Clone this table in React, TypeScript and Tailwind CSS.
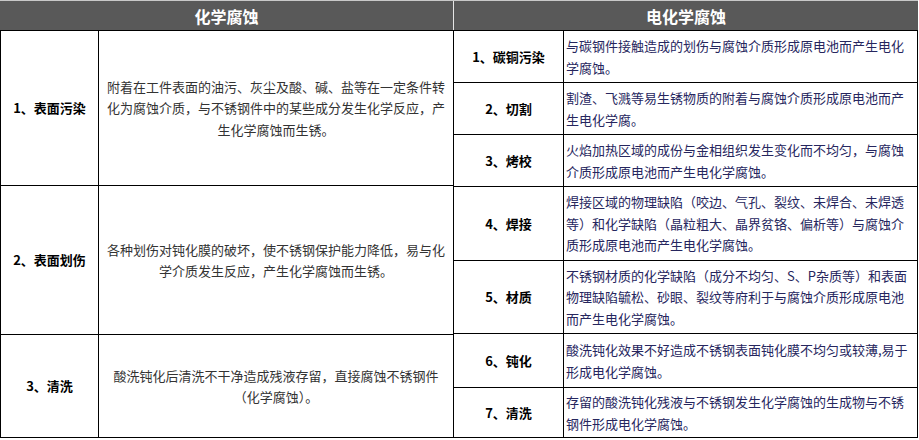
const font = { fontFamily: '"Noto Sans CJK SC", "Noto Sans", sans-serif' };

interface Row {
  label: string;
  lines: string[];
  height: string;
}

const chemical: Row[] = [
  {
    label: "1、表面污染",
    lines: [
      "附着在工件表面的油污、灰尘及酸、碱、盐等在一定条件转",
      "化为腐蚀介质，与不锈钢件中的某些成分发生化学反应，产",
      "生化学腐蚀而生锈。",
    ],
    height: "h-[155px]",
  },
  {
    label: "2、表面划伤",
    lines: [
      "各种划伤对钝化膜的破坏，使不锈钢保护能力降低，易与化",
      "学介质发生反应，产生化学腐蚀而生锈。",
    ],
    height: "h-[149px]",
  },
  {
    label: "3、清洗",
    lines: ["酸洗钝化后清洗不干净造成残液存留，直接腐蚀不锈钢件", "（化学腐蚀）。"],
    height: "h-[103px]",
  },
];

const electro: Row[] = [
  {
    label: "1、碳铜污染",
    lines: ["与碳钢件接触造成的划伤与腐蚀介质形成原电池而产生电化", "学腐蚀。"],
    height: "h-[52px]",
  },
  {
    label: "2、切割",
    lines: ["割渣、飞溅等易生锈物质的附着与腐蚀介质形成原电池而产", "生电化学腐。"],
    height: "h-[52px]",
  },
  {
    label: "3、烤校",
    lines: ["火焰加热区域的成份与金相组织发生变化而不均匀，与腐蚀", "介质形成原电池而产生电化学腐蚀。"],
    height: "h-[52px]",
  },
  {
    label: "4、焊接",
    lines: [
      "焊接区域的物理缺陷（咬边、气孔、裂纹、未焊合、未焊透",
      "等）和化学缺陷（晶粒粗大、晶界贫铬、偏析等）与腐蚀介",
      "质形成原电池而产生电化学腐蚀。",
    ],
    height: "h-[74px]",
  },
  {
    label: "5、材质",
    lines: [
      "不锈钢材质的化学缺陷（成分不均匀、S、P杂质等）和表面",
      "物理缺陷毓松、砂眼、裂纹等府利于与腐蚀介质形成原电池",
      "而产生电化学腐蚀。",
    ],
    height: "h-[73px]",
  },
  {
    label: "6、钝化",
    lines: ["酸洗钝化效果不好造成不锈钢表面钝化膜不均匀或较薄,易于", "形成电化学腐蚀。"],
    height: "h-[54px]",
  },
  {
    label: "7、清洗",
    lines: ["存留的酸洗钝化残液与不锈钢发生化学腐蚀的生成物与不锈", "钢件形成电化学腐蚀。"],
    height: "h-[50px]",
  },
];

export default function App() {
  return (
    <div className="w-[919px] h-[440px] bg-white" style={font}>
      <div className="w-[918px]">
        <div className="flex h-[31px] border-t border-b border-t-[#c8c8c8] border-b-black bg-[#595959] text-white text-[16px] font-bold">
          <div className="w-[454px] flex items-center justify-center border-r border-[#e6e6e6]">化学腐蚀</div>
          <div className="w-[464px] flex items-center justify-center">电化学腐蚀</div>
        </div>
        <div className="flex">
          <div className="w-[454px] border-l border-black">
            {chemical.map((row) => (
              <div key={row.label} className={`flex border-b border-black ${row.height}`}>
                <div className="w-[98px] border-r border-black flex items-center justify-center text-[13px] font-bold text-black">
                  {row.label}
                </div>
                <div className="w-[355px] border-r border-black flex items-center justify-center text-center text-[13px] leading-[21.5px] text-[#333]">
                  <div>
                    {row.lines.map((l) => (
                      <div key={l}>{l}</div>
                    ))}
                  </div>
                </div>
              </div>
            ))}
          </div>
          <div className="w-[464px]">
            {electro.map((row) => (
              <div key={row.label} className={`flex border-b border-black ${row.height}`}>
                <div className="w-[110px] border-r border-black flex items-center justify-center text-[13px] font-bold text-black">
                  {row.label}
                </div>
                <div className="w-[354px] border-r border-black flex items-center pl-[2px] text-[13px] leading-[21.5px] text-[#26265e] whitespace-nowrap">
                  <div>
                    {row.lines.map((l) => (
                      <div key={l}>{l}</div>
                    ))}
                  </div>
                </div>
              </div>
            ))}
          </div>
        </div>
      </div>
    </div>
  );
}
